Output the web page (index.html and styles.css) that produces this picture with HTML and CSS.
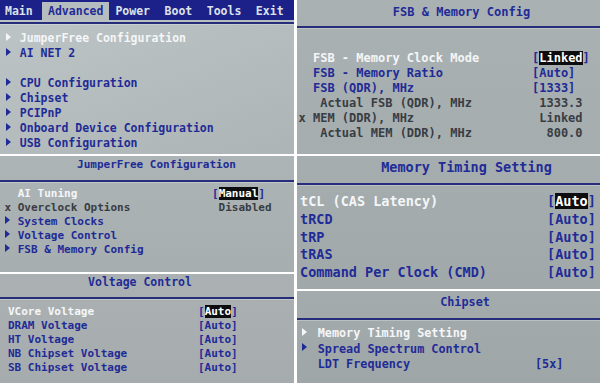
FILE: index.html
```html
<!DOCTYPE html>
<html>
<head>
<meta charset="utf-8">
<link rel="stylesheet" href="styles.css">
</head>
<body>
<div class="screen">
  <div class="col col-left">
    <section class="panel p1">
      <nav class="menubar">
        <span class="m">Main</span><span class="m tab">Advanced</span><span class="m">Power</span><span class="m">Boot</span><span class="m">Tools</span><span class="m">Exit</span>
      </nav>
      <div class="rule r1"></div>
      <ul class="items">
        <li class="w"><span class="arr"></span>JumperFree Configuration</li>
        <li><span class="arr"></span>AI NET 2</li>
        <li class="blank"></li>
        <li><span class="arr"></span>CPU Configuration</li>
        <li><span class="arr"></span>Chipset</li>
        <li><span class="arr"></span>PCIPnP</li>
        <li><span class="arr"></span>Onboard Device Configuration</li>
        <li><span class="arr"></span>USB Configuration</li>
      </ul>
    </section>

    <section class="panel p3">
      <div class="title">JumperFree Configuration</div>
      <div class="rule"></div>
      <ul class="items">
        <li class="row w"><span class="lbl">  AI Tuning</span><span class="val">[<b class="sel">Manual</b>]</span></li>
        <li class="row g"><span class="lbl">x Overclock Options</span><span class="val"> Disabled</span></li>
        <li><span class="arr"></span>System Clocks</li>
        <li><span class="arr"></span>Voltage Control</li>
        <li><span class="arr"></span>FSB &amp; Memory Config</li>
      </ul>
    </section>

    <section class="panel p5">
      <div class="title">Voltage Control</div>
      <div class="rule"></div>
      <ul class="items">
        <li class="row w"><span class="lbl">VCore Voltage</span><span class="val">[<b class="sel">Auto</b>]</span></li>
        <li class="row"><span class="lbl">DRAM Voltage</span><span class="val">[Auto]</span></li>
        <li class="row"><span class="lbl">HT Voltage</span><span class="val">[Auto]</span></li>
        <li class="row"><span class="lbl">NB Chipset Voltage</span><span class="val">[Auto]</span></li>
        <li class="row"><span class="lbl">SB Chipset Voltage</span><span class="val">[Auto]</span></li>
      </ul>
    </section>
  </div>

  <div class="col col-right">
    <section class="panel p2">
      <div class="title">FSB &amp; Memory Config</div>
      <div class="rule"></div>
      <ul class="items">
        <li class="row w"><span class="lbl">  FSB - Memory Clock Mode</span><span class="val">[<b class="sel">Linked</b>]</span></li>
        <li class="row"><span class="lbl">  FSB - Memory Ratio</span><span class="val">[Auto]</span></li>
        <li class="row"><span class="lbl">  FSB (QDR), MHz</span><span class="val">[1333]</span></li>
        <li class="row g"><span class="lbl">   Actual FSB (QDR), MHz</span><span class="val"> 1333.3</span></li>
        <li class="row g"><span class="lbl">x MEM (DDR), MHz</span><span class="val"> Linked</span></li>
        <li class="row g"><span class="lbl">   Actual MEM (DDR), MHz</span><span class="val">  800.0</span></li>
      </ul>
    </section>

    <section class="panel p4">
      <div class="title">Memory Timing Setting</div>
      <div class="rule"></div>
      <ul class="items">
        <li class="row w"><span class="lbl">tCL (CAS Latency)</span><span class="val">[<b class="sel">Auto</b>]</span></li>
        <li class="row"><span class="lbl">tRCD</span><span class="val">[Auto]</span></li>
        <li class="row"><span class="lbl">tRP</span><span class="val">[Auto]</span></li>
        <li class="row"><span class="lbl">tRAS</span><span class="val">[Auto]</span></li>
        <li class="row"><span class="lbl">Command Per Clock (CMD)</span><span class="val">[Auto]</span></li>
      </ul>
    </section>

    <section class="panel p6">
      <div class="title">Chipset</div>
      <div class="rule"></div>
      <ul class="items">
        <li class="w"><span class="arr"></span>Memory Timing Setting</li>
        <li><span class="arr"></span>Spread Spectrum Control</li>
        <li class="row"><span class="lbl">  LDT Frequency</span><span class="val">[5x]</span></li>
      </ul>
    </section>
  </div>
</div>
</body>
</html>
```

FILE: styles.css
```css
html, body {
  margin: 0;
  padding: 0;
}
body {
  background: #ffffff;
  font-family: "DejaVu Sans Mono", "Liberation Mono", monospace;
  font-weight: bold;
  color: #1f2b96;
}
.screen {
  display: flex;
  gap: 3px;
  width: 600px;
  height: 383px;
  overflow: hidden;
}
.col {
  display: flex;
  flex-direction: column;
  gap: 2px;
}
.col-left { width: 294px; }
.col-right { width: 303px; }

.panel {
  overflow: hidden;
  background: #a8afb1;
  white-space: nowrap;
}
.items {
  list-style: none;
  margin: 0;
  padding: 0;
}
.items li { display: block; }
.items .row {
  display: grid;
}
.lbl { white-space: pre; }
.val { white-space: pre; }
.w { color: #f4f6f8; }
.w .val { color: #1f2b96; }
.g { color: #383d43; }
.g .val { color: #383d43; }
.sel {
  background: #0d0d0f;
  color: #ffffff;
  font-weight: bold;
}
.title {
  text-align: center;
  color: #1f2b96;
}
.rule {
  height: 2px;
  background: #262e7c;
  box-shadow: 0 1px 0 rgba(255,255,255,0.25);
}
.arr {
  display: inline-block;
  width: 2ch;
  height: 1em;
  vertical-align: -0.12em;
  position: relative;
}
.arr::before {
  content: "";
  position: absolute;
  left: 0;
  top: 1px;
  border-left: 5px solid currentColor;
  border-top: 4px solid transparent;
  border-bottom: 4px solid transparent;
}

/* Panel 1: Advanced menu */
.p1 {
  height: 154px;
  font-size: 11.5px;
  background: linear-gradient(160deg, #bec5c6 0%, #b4bbbc 60%, #adb4b5 100%);
}
.menubar {
  display: flex;
  gap: 14.5px;
  height: 20px;
  padding: 2px 0 0 5px;
  box-sizing: border-box;
  background: #1b2189;
  color: #dde2ea;
  line-height: 18px;
}
.m.tab {
  background: #b6bdbe;
  color: #1f2b96;
  padding: 0 6px;
  margin: 0 -8.5px 0 -5.2px;
}
.r1 { margin-top: 2px; }
.p1 .items {
  padding: 7px 0 0 6px;
  line-height: 15px;
}
.p1 .blank { height: 15px; }

/* Panel 2: FSB & Memory Config */
.p2 {
  height: 154px;
  font-size: 12px;
  background: linear-gradient(180deg, #aab1b3 0%, #a6adaf 100%);
}
.p2 .title {
  height: 26px;
  line-height: 24px;
  padding-left: 26px;
}
.p2 .items {
  padding: 23px 0 0 1.5px;
  line-height: 15px;
}
.p2 .row { grid-template-columns: 233.5px auto; }

/* Panel 3: JumperFree Configuration */
.p3 {
  height: 116px;
  font-size: 11px;
  background: linear-gradient(180deg, #adb4b6 0%, #a7aeb0 100%);
}
.p3 .title {
  height: 24px;
  line-height: 18px;
  padding-left: 19px;
}
.p3 .items {
  padding: 5px 0 0 4.5px;
  line-height: 14px;
}
.p3 .row { grid-template-columns: 207.5px auto; }

/* Panel 4: Memory Timing Setting */
.p4 {
  height: 133px;
  font-size: 13.5px;
  background: linear-gradient(180deg, #a6adaf 0%, #a1a8aa 100%);
}
.p4 .title {
  height: 27px;
  line-height: 22px;
  padding-left: 36px;
}
.p4 .items {
  padding: 8px 0 0 3px;
  line-height: 17.75px;
}
.p4 .row { grid-template-columns: 247px auto; }

/* Panel 5: Voltage Control */
.p5 {
  height: 109px;
  font-size: 11px;
  background: linear-gradient(180deg, #abb1b2 0%, #a6acad 100%);
}
.p5 .title {
  height: 23px;
  line-height: 16px;
  font-size: 11.5px;
  padding-right: 14px;
}
.p5 .items {
  padding: 6px 0 0 8px;
  line-height: 14px;
}
.p5 .row { grid-template-columns: 190px auto; }

/* Panel 6: Chipset */
.p6 {
  height: 92px;
  font-size: 11.8px;
  background: linear-gradient(180deg, #a4abad 0%, #9fa6a8 100%);
}
.p6 .title {
  height: 27px;
  line-height: 22px;
  padding-left: 33px;
}
.p6 .items {
  padding: 6px 0 0 6.5px;
  line-height: 15.5px;
}
.p6 .row { grid-template-columns: 231.5px auto; }
.p6 .arr::before { left: -1.5px; }
```
